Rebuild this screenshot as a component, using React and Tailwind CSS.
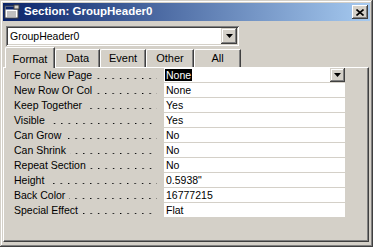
import React from 'react'

const rows = [
  ['Force New Page', 'None'],
  ['New Row Or Col', 'None'],
  ['Keep Together', 'Yes'],
  ['Visible', 'Yes'],
  ['Can Grow', 'No'],
  ['Can Shrink', 'No'],
  ['Repeat Section', 'No'],
  ['Height', '0.5938"'],
  ['Back Color', '16777215'],
  ['Special Effect', 'Flat'],
]

const tabs = [
  { label: 'Format', w: 'w-[50px]' },
  { label: 'Data', w: 'w-[45px]' },
  { label: 'Event', w: 'w-[46px]' },
  { label: 'Other', w: 'w-[48px]' },
  { label: 'All', w: 'w-[47px]' },
]

// small down arrow used on the combo buttons
const DropButton = ({ size }) => (
  <div
    className={`${size} shrink-0 flex items-center justify-center bg-[#d4d0c8] shadow-[inset_-1px_-1px_#404040,inset_1px_1px_#d4d0c8,inset_-2px_-2px_#808080,inset_2px_2px_#fff]`}
  >
    <svg width="7" height="4" viewBox="0 0 7 4">
      <path d="M0 0h7L3.5 4z" fill="#000" />
    </svg>
  </div>
)

const FormIcon = () => (
  <svg width="16" height="16" viewBox="0 0 16 16">
    <rect x="1" y="2" width="13" height="12" fill="#fff" stroke="#404040" />
    <rect x="1.5" y="2.5" width="12" height="3" fill="#0a246a" />
    <path d="M3 8h9M3 10h9M3 12h9" stroke="#808080" />
    <rect x="10" y="1" width="5" height="4" fill="#d4d0c8" stroke="#404040" />
  </svg>
)

export default function App() {
  return (
    <div className="w-[373px] h-[247px] bg-[#d4d0c8] p-[3px] flex flex-col shadow-[inset_-1px_-1px_#404040,inset_1px_1px_#d4d0c8,inset_-2px_-2px_#808080,inset_2px_2px_#fff] font-['Liberation_Sans',Arial,sans-serif] text-[10.5px] text-black overflow-hidden">
      {/* title bar */}
      <div className="h-[18px] shrink-0 flex items-center bg-[linear-gradient(to_right,#0a246a,#a6caf0)] pl-[1px] pr-[2px]">
        <FormIcon />
        <span className="ml-[4px] text-white font-bold text-[11.5px] leading-none">Section: GroupHeader0</span>
        <div className="ml-auto w-[16px] h-[14px] flex items-center justify-center bg-[#d4d0c8] shadow-[inset_-1px_-1px_#404040,inset_1px_1px_#fff,inset_-2px_-2px_#808080]">
          <svg width="8" height="7" viewBox="0 0 8 7">
            <path d="M0.5 0.5L7.5 6.5M7.5 0.5L0.5 6.5" stroke="#000" strokeWidth="1.6" />
          </svg>
        </div>
      </div>

      {/* object combo */}
      <div className="mt-[5px] ml-[3px] w-[233px] h-[20px] flex items-center bg-white p-[2px] shadow-[inset_1px_1px_#808080,inset_-1px_-1px_#fff,inset_2px_2px_#404040,inset_-2px_-2px_#d4d0c8]">
        <span className="flex-1 pl-[2px] leading-none">GroupHeader0</span>
        <DropButton size="w-[16px] h-[16px]" />
      </div>

      {/* tabs */}
      <div className="mt-[1px] h-[20px] flex items-end pl-[2px] relative z-10">
        {tabs.map((t, i) =>
          i === 0 ? (
            <div
              key={t.label}
              className={`${t.w} h-[21px] -mb-[1px] flex items-start pt-[3px] justify-center bg-[#d4d0c8] border-l border-t border-white rounded-tl-[2px] shadow-[inset_-1px_0_#808080] border-r border-r-[#404040] text-[11px]`}
            >
              {t.label}
            </div>
          ) : (
            <div
              key={t.label}
              className={`${t.w} h-[18px] flex items-center justify-center border-t border-white border-l rounded-tl-[2px] border-r border-r-[#404040] shadow-[inset_-1px_0_#808080] text-[11px]`}
            >
              {t.label}
            </div>
          )
        )}
      </div>

      {/* property panel */}
      <div className="flex-1 mr-[1px] mb-[2px] border-t border-l border-white shadow-[inset_-1px_-1px_#808080] border-r border-b border-r-[#404040] border-b-[#404040] pl-[10px] flex flex-col gap-[1px]">
        {rows.map(([label, value], i) => (
          <div key={label} className="h-[14px] flex items-center">
            <div className="w-[150px] h-full shrink-0 pr-[7px] flex items-end whitespace-nowrap">
              <span className="shrink-0 leading-[14px]">{label}</span>
              <span className="ml-[4px] mb-[3px] flex-1 h-[1px] bg-[linear-gradient(to_right,#000_1px,#777_1px,#777_2px,transparent_2px)] bg-size-[7.4px_1px] bg-repeat-x bg-right" />
            </div>
            <div className="w-[181px] h-full bg-white flex items-center pl-[1px] leading-none">
              {i === 0 ? (
                <>
                  <span className="bg-black text-white px-[1px] leading-[12px]">{value}</span>
                  <span className="flex-1" />
                  <DropButton size="w-[15px] h-[14px]" />
                </>
              ) : (
                <span className="pl-[1px]">{value}</span>
              )}
            </div>
          </div>
        ))}
      </div>
    </div>
  )
}
